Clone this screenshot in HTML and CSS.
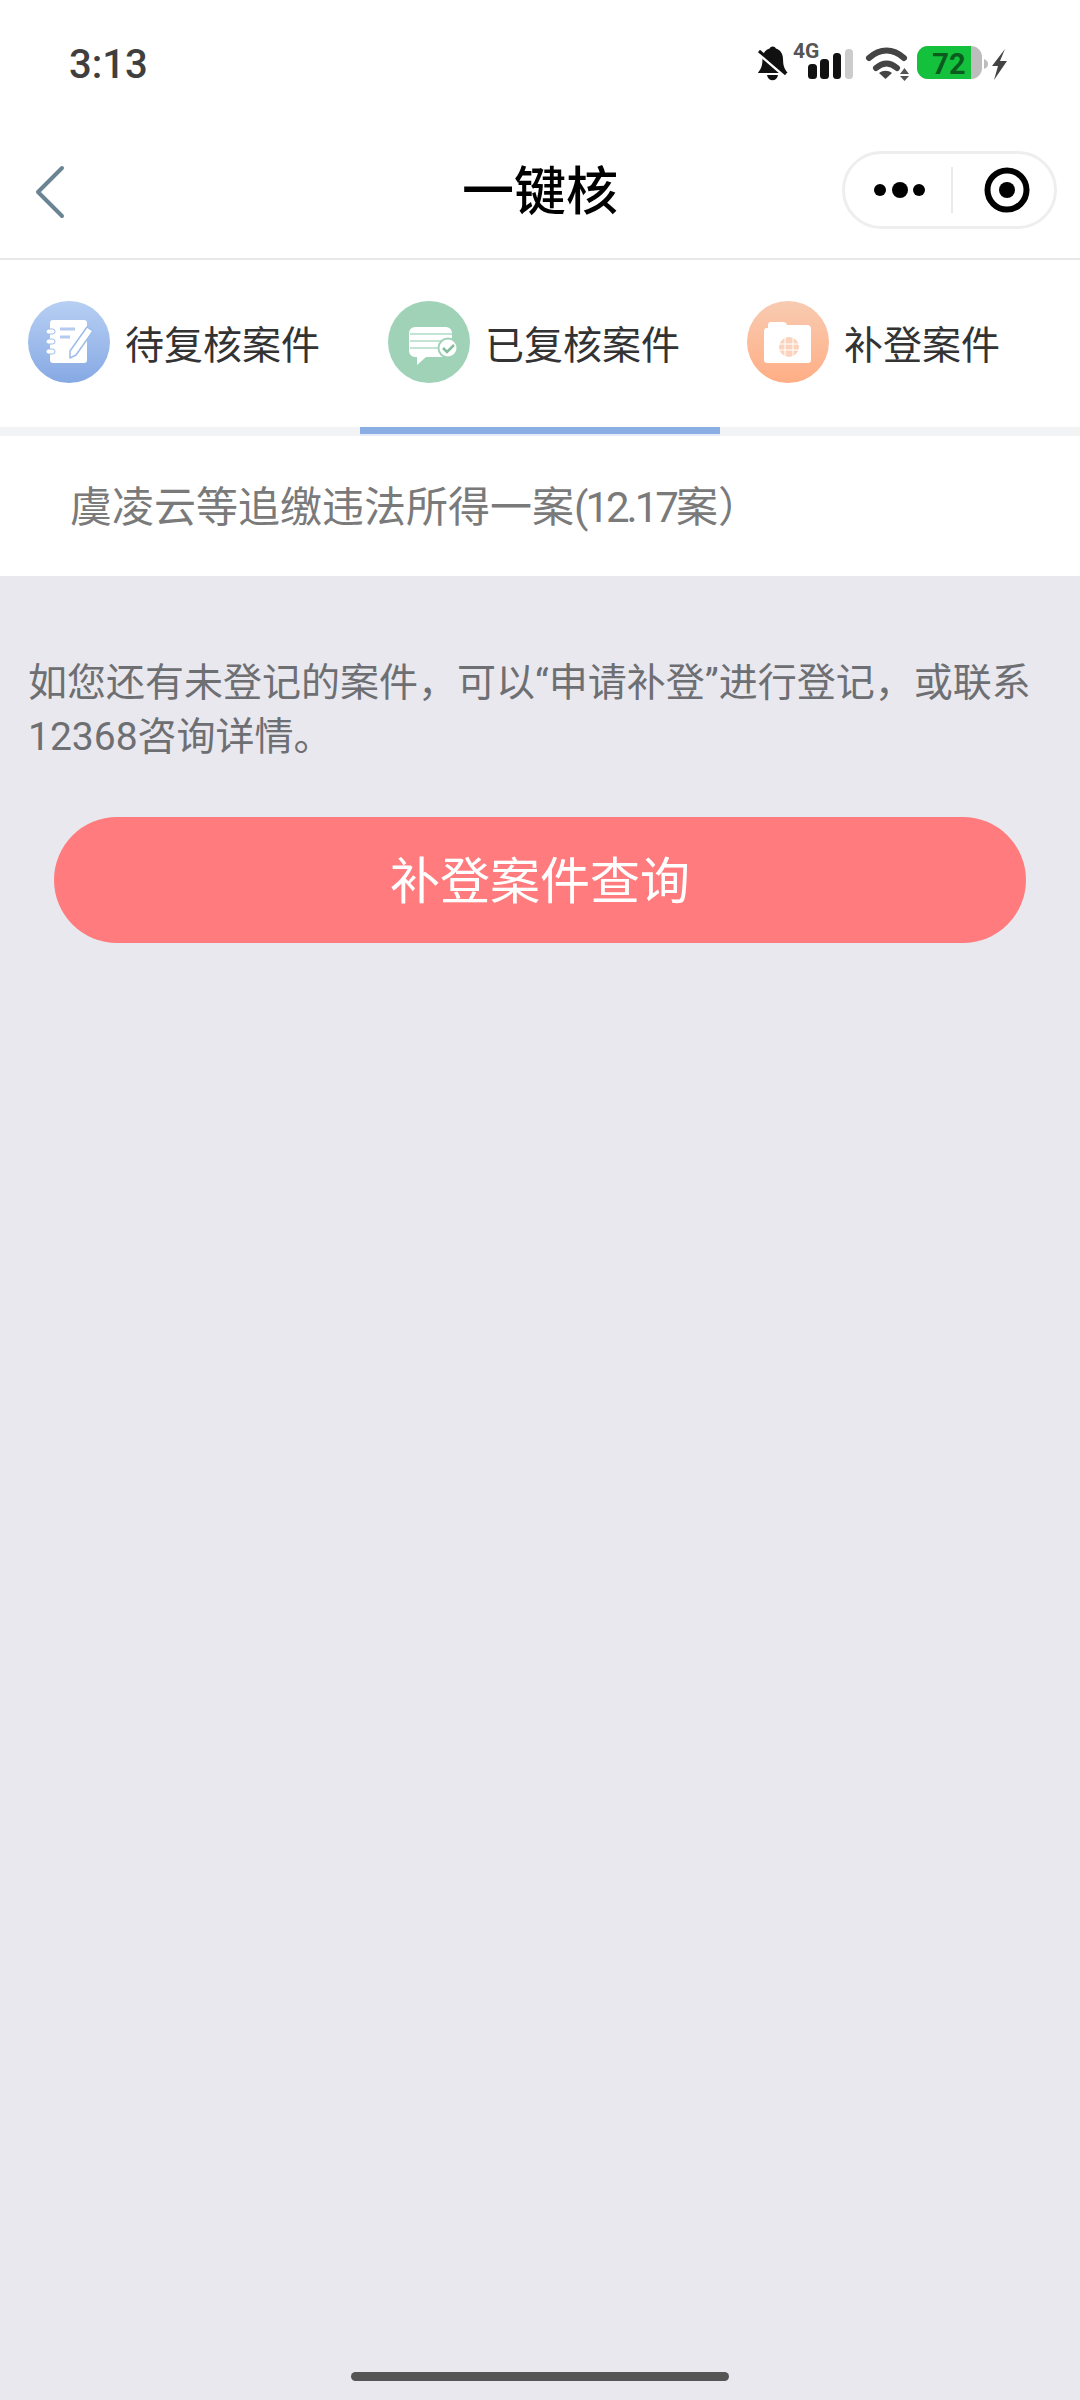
FILE: index.html
```html
<!DOCTYPE html>
<html lang="zh-CN">
<head>
  <meta charset="UTF-8">
  <meta name="viewport" content="width=device-width, initial-scale=1.0">
  <title>一键核</title>
  <link rel="stylesheet" href="styles.css">
</head>
<body>
  <div class="status-bar">
    <span class="clock">3:13</span>
    <svg class="status-icons" width="260" height="58" viewBox="0 -10 260 58">
      <!-- bell, muted -->
      <path d="M14 4c1-3 6-3 7 0 6 2 8 7 8 13 0 7 2 10 5 14H1c3-4 5-7 5-14 0-6 2-11 8-13z" fill="#111" transform="translate(0 4) scale(.9)"/>
      <path d="M10 34c1 7 10 7 11 0z" fill="#111"/>
      <path d="M2 13l28 24" stroke="#fff" stroke-width="3"/>
      <path d="M2 10l27 23" stroke="#111" stroke-width="3"/>
      <!-- 4G + signal -->
      <text class="net-label" x="36" y="17">4G</text>
      <rect x="51" y="23" width="9" height="15" rx="3.500" fill="#111"/>
      <rect x="63" y="18" width="9" height="20" rx="3.500" fill="#111"/>
      <rect x="76" y="12" width="8" height="26" rx="3.500" fill="#111"/>
      <rect x="88" y="8" width="8" height="30" rx="3.500" fill="#ccc"/>
      <!-- wifi -->
      <path d="M112 17c11-10 24-10 35 0" fill="none" stroke="#444" stroke-width="6" stroke-linecap="round"/>
      <path d="M119 27c7-6 14-6 21 0" fill="none" stroke="#444" stroke-width="6" stroke-linecap="round"/>
      <path d="M122 32c4-3 9-3 13 0l-6.500 6z" fill="#444"/>
      <path d="M143 33l4.500-6 4.500 6zM143 35l4.500 5 4.500-5z" fill="#555"/>
      <!-- battery -->
      <rect x="160" y="5" width="65" height="33" rx="11" fill="#bdbdbd"/>
      <path d="M171 5h43v33h-43a11 11 0 0 1-11-11v-11a11 11 0 0 1 11-11z" fill="#14c13c"/>
      <text class="battery-label" x="192" y="33" text-anchor="middle">72</text>
      <path d="M227 18c3 1 4 3 4 5s-1 4-4 5z" fill="#bdbdbd"/>
      <!-- charging bolt -->
      <path d="M248 8l-13 17h6l-4 14 13-19h-7z" fill="#444"/>
    </svg>
  </div>

  <header class="nav-bar">
    <svg class="back-icon" width="30" height="54" viewBox="0 0 30 54">
      <path d="M27 3L3 27l24 24" fill="none" stroke="#6b8494" stroke-width="4" stroke-linecap="round" stroke-linejoin="round"/>
    </svg>
    <h1 class="nav-title">一键核</h1>
    <div class="capsule">
      <svg class="capsule-more" width="60" height="20" viewBox="0 0 60 20">
        <circle cx="9" cy="10" r="6"/>
        <circle cx="29" cy="10" r="8"/>
        <circle cx="48" cy="10" r="6"/>
      </svg>
      <span class="capsule-divider"></span>
      <svg class="capsule-target" width="46" height="46" viewBox="0 0 46 46">
        <circle cx="23" cy="23" r="19.500" fill="none" stroke="#000" stroke-width="6"/>
        <circle cx="23" cy="23" r="8"/>
      </svg>
    </div>
  </header>

  <nav class="tabs">
    <div class="tab">
      <div class="tab-row">
        <svg class="tab-icon" width="82" height="82" viewBox="0 0 82 82">
          <defs>
            <linearGradient id="blue-fill" x1="0" y1="0" x2="0" y2="1">
              <stop offset="0" stop-color="#b7cff3"/>
              <stop offset="1" stop-color="#86a9e4"/>
            </linearGradient>
          </defs>
          <circle cx="41" cy="41" r="41" fill="url(#blue-fill)"/>
          <rect x="22" y="19" width="37" height="43" rx="3" fill="#fff"/>
          <rect x="18" y="28" width="9" height="5" rx="2.500" fill="#fff" stroke="#9dbbea"/>
          <rect x="18" y="38" width="9" height="5" rx="2.500" fill="#fff" stroke="#9dbbea"/>
          <rect x="18" y="48" width="9" height="5" rx="2.500" fill="#fff" stroke="#9dbbea"/>
          <path d="M32 28h15M32 36h10" stroke="#b4cbef" stroke-width="3"/>
          <path d="M59 26l6 4-17 24-6 3 0-7z" fill="#fff" stroke="#9dbbea" stroke-width="1.500" stroke-linejoin="round"/>
        </svg>
        <span class="tab-label">待复核案件</span>
      </div>
      <div class="tab-line"></div>
    </div>
    <div class="tab tab-active">
      <div class="tab-row">
        <svg class="tab-icon" width="82" height="82" viewBox="0 0 82 82">
          <circle cx="41" cy="41" r="41" fill="#9fd2b7"/>
          <path d="M27 26h31a6 6 0 0 1 6 6v18a6 6 0 0 1-6 6H38l-9 8v-8h-2a6 6 0 0 1-6-6V32a6 6 0 0 1 6-6z" fill="#fff"/>
          <path d="M22 33h42M22 40h42M22 47h30" stroke="#c4e4d3" stroke-width="2"/>
          <circle cx="60" cy="47" r="9.500" fill="#fff" stroke="#9fd2b7" stroke-width="2"/>
          <path d="M55 47l4 4 7-7" fill="none" stroke="#82bd9e" stroke-width="2.500"/>
        </svg>
        <span class="tab-label">已复核案件</span>
      </div>
      <div class="tab-line"></div>
    </div>
    <div class="tab">
      <div class="tab-row">
        <svg class="tab-icon" width="82" height="82" viewBox="0 0 82 82">
          <defs>
            <linearGradient id="orange-fill" x1="0" y1="0" x2="0" y2="1">
              <stop offset="0" stop-color="#f8cbb1"/>
              <stop offset="1" stop-color="#ffae85"/>
            </linearGradient>
          </defs>
          <circle cx="41" cy="41" r="41" fill="url(#orange-fill)"/>
          <path d="M24 21h12a4 4 0 0 1 4 3h20a4 4 0 0 1 4 4v1H21v-5a3 3 0 0 1 3-3z" fill="#fff"/>
          <rect x="17" y="27" width="47" height="35" rx="3" fill="#fff"/>
          <circle cx="42" cy="46" r="10" fill="#fbd3bc"/>
          <path d="M32 43h20M32 49h20M38 36v20M46 36v20" stroke="#fff" stroke-width="1"/>
        </svg>
        <span class="tab-label">补登案件</span>
      </div>
      <div class="tab-line"></div>
    </div>
  </nav>

  <div class="case-row"><span>虞凌云等追缴违法所得一案<span class="case-no">(12.17</span>案）</span></div>

  <main class="content">
    <p class="hint">如您还有未登记的案件，可以“申请补登”进行登记，或联系12368咨询详情。</p>
    <button class="query-button">补登案件查询</button>
  </main>

  <div class="home-bar"></div>
</body>
</html>
```

FILE: styles.css
```css
html, body {
  width: 100%;
  height: 100%;
  overflow: hidden;
}

body {
  font-family: Roboto, 'Noto Sans CJK SC', sans-serif;
  margin: 0;
  padding: 0;
  display: flex;
  flex-direction: column;
  background-color: #e8e8ee;
}

.status-bar {
  height: 86px;
  padding: 31px 70px 0 69px;
  box-sizing: border-box;
  display: flex;
  justify-content: space-between;
  align-items: flex-start;
  background-color: #fff;
}

.clock {
  margin-top: 10px;
  font-size: 40px;
  line-height: 48px;
  font-weight: 500;
  color: #3f3f3f;
}

.status-icons {
  margin-right: -7px;
  flex: none;
}

.net-label {
  font-family: Roboto, sans-serif;
  font-size: 21px;
  font-weight: 700;
  fill: #555;
}

.battery-label {
  font-family: Roboto, sans-serif;
  font-size: 29px;
  font-weight: 700;
  fill: #0b5a1e;
}

.nav-bar {
  height: 174px;
  box-sizing: border-box;
  padding: 36px 23px 0;
  display: grid;
  grid-template-columns: 1fr auto 1fr;
  align-items: center;
  background-color: #fff;
  border-bottom: 2px solid #e7e7e7;
}

.back-icon {
  display: block;
  margin: 3px 0 0 12px;
}

.nav-title {
  margin: 6px 0 0;
  font-size: 52px;
  line-height: 72px;
  font-weight: 500;
  color: #000;
}

.capsule {
  justify-self: end;
  width: 215px;
  height: 78px;
  box-sizing: border-box;
  border: 3px solid #eee;
  border-radius: 39px;
  display: flex;
  align-items: center;
  padding-left: 26px;
}

.capsule-more {
  display: block;
  flex: none;
}

.capsule-divider {
  width: 2px;
  height: 46px;
  margin-left: 20px;
  background-color: #eaeaea;
  flex: none;
}

.capsule-target {
  display: block;
  margin-left: 31px;
  flex: none;
}

.tabs {
  display: flex;
  background-color: #fff;
}

.tab {
  flex: 1;
  display: flex;
  flex-direction: column;
}

.tab-row {
  height: 167px;
  padding-left: 28px;
  padding-bottom: 4px;
  box-sizing: border-box;
  display: flex;
  align-items: center;
  gap: 15px;
}

.tab:last-child .tab-row {
  padding-left: 27px;
}

.tab-icon {
  display: block;
  flex: none;
}

.tab-label {
  font-size: 39px;
  color: #333;
}

.tab-line {
  height: 9px;
  background-color: #f2f3f5;
}

.tab-active .tab-line {
  box-sizing: border-box;
  background-color: #8aaee3;
  border-bottom: 2px solid #e4ecf9;
}

.case-row {
  height: 140px;
  padding: 0 0 6px 70px;
  box-sizing: border-box;
  display: flex;
  align-items: center;
  background-color: #fff;
  font-size: 42px;
  color: #7a7a7a;
}

.case-no {
  letter-spacing: -3px;
}

.content {
  flex: 1;
  padding: 80px 28px 0;
}

.hint {
  margin: 0;
  font-size: 39px;
  line-height: 54px;
  color: #6e6f73;
}

.query-button {
  display: block;
  width: 972px;
  height: 126px;
  margin: 53px 0 0 26px;
  padding: 0 0 6px;
  border: none;
  border-radius: 63px;
  background-color: #ff7b7d;
  color: #fff;
  font-family: inherit;
  font-size: 50px;
}

.home-bar {
  position: absolute;
  left: 351px;
  bottom: 19px;
  width: 378px;
  height: 9px;
  border-radius: 5px;
  background-color: #555;
}
```
